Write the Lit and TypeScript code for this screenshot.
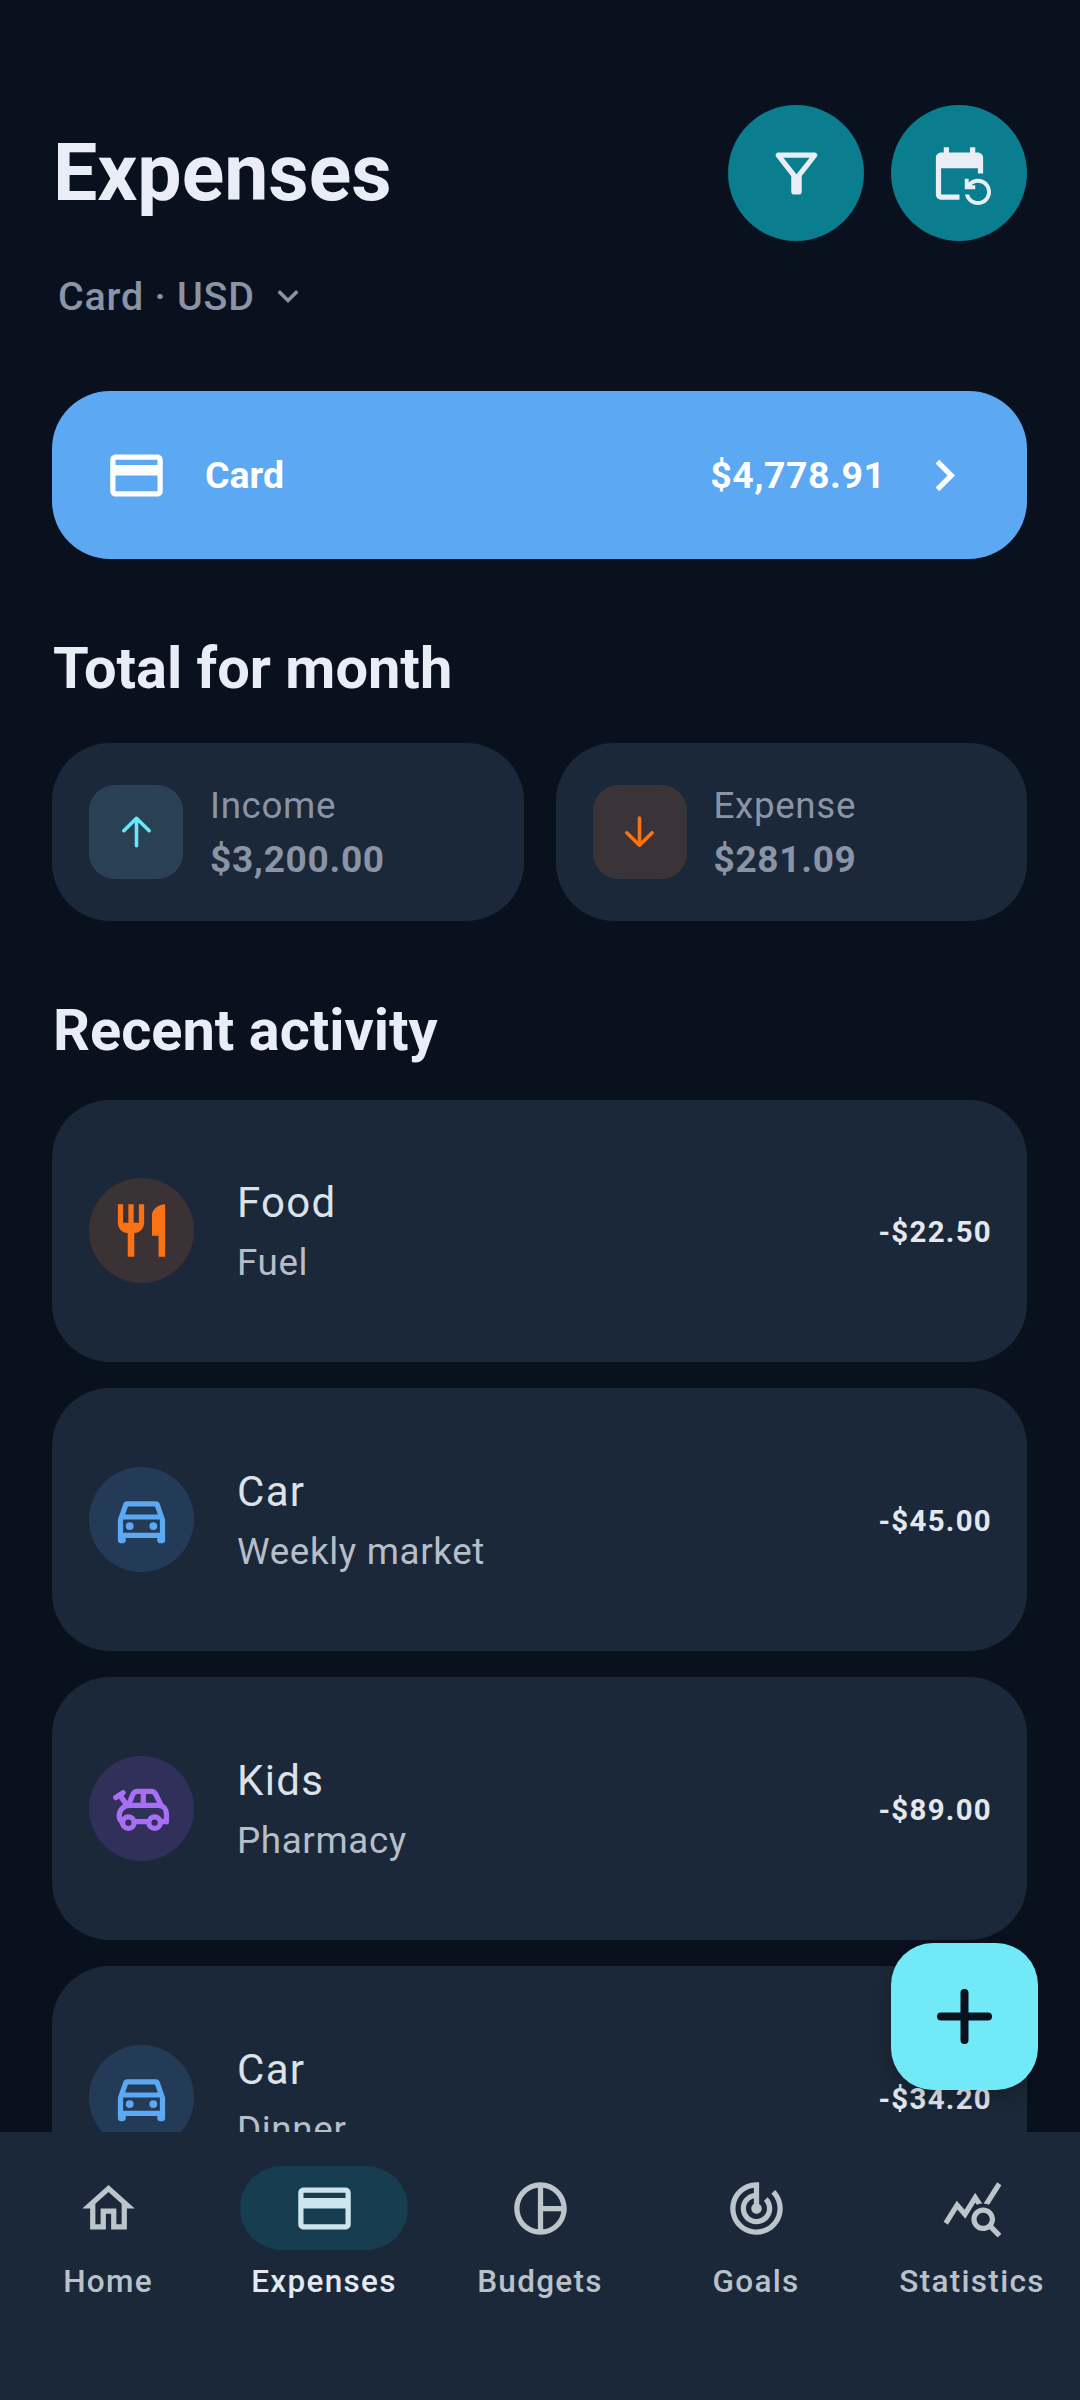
import { LitElement, html, css, svg } from 'lit';
import { customElement } from 'lit/decorators.js';

const P = {
  card: 'M20 4H4c-1.11 0-1.99.89-1.99 2L2 18c0 1.11.89 2 2 2h16c1.11 0 2-.89 2-2V6c0-1.11-.89-2-2-2zm0 14H4v-6h16v6zm0-10H4V6h16v2z',
  filter: 'M7 6h10l-5.01 6.3L7 6zm-2.75-.39C6.27 8.2 10 13 10 13v6c0 .55.45 1 1 1h2c.55 0 1-.45 1-1v-6s3.72-4.8 5.74-7.39c.51-.66.04-1.61-.79-1.61H5.04c-.83 0-1.3.95-.79 1.61z',
  repeat: 'M21 12V6c0-1.1-.9-2-2-2h-1V2h-2v2H8V2H6v2H5c-1.1 0-2 .9-2 2v14c0 1.1.9 2 2 2h7v-2H5V10h14v2h2zm-5.36 8c.43 1.45 1.77 2.5 3.36 2.5 1.93 0 3.5-1.57 3.5-3.5s-1.57-3.5-3.5-3.5c-.95 0-1.82.38-2.45 1H18V18h-4v-4h1.5v1.43C16.4 14.55 17.64 14 19 14c2.76 0 5 2.24 5 5s-2.24 5-5 5c-2.42 0-4.44-1.72-4.9-4h1.54z',
  food: 'M11 9H9V2H7v7H5V2H3v7c0 2.12 1.66 3.84 3.75 3.97V22h2.5v-9.03C11.34 12.84 13 11.12 13 9V2h-2v7zm5-3v8h2.5v8H21V2c-2.76 0-5 2.24-5 4z',
  car: 'M18.92 6.01C18.72 5.42 18.16 5 17.5 5h-11c-.66 0-1.21.42-1.42 1.01L3 12v8c0 .55.45 1 1 1h1c.55 0 1-.45 1-1v-1h12v1c0 .55.45 1 1 1h1c.55 0 1-.45 1-1v-8l-2.08-5.99zM6.85 7h10.29l1.08 3.11H5.77L6.85 7zM19 17H5v-5h14v5zM7.5 13a1.5 1.5 0 1 0 0 3 1.5 1.5 0 0 0 0-3zm9 0a1.5 1.5 0 1 0 0 3 1.5 1.5 0 0 0 0-3z',
  home: 'M12 5.69l5 4.5V18h-2v-6H9v6H7v-7.81l5-4.5M12 3L2 12h3v8h6v-6h2v6h6v-8h3L12 3z',
  pie: 'M12 2C6.49 2 2 6.49 2 12s4.49 10 10 10 10-4.49 10-10S17.51 2 12 2zm7.93 9H13V4.07c3.61.45 6.48 3.32 6.93 6.93zM4 12c0-4.07 3.06-7.44 7-7.93v15.86c-3.94-.49-7-3.86-7-7.93zm9 7.93V13h6.93c-.45 3.61-3.32 6.48-6.93 6.93z',
  track: 'M19.07 4.93l-1.41 1.41C19.1 7.79 20 9.79 20 12c0 4.42-3.58 8-8 8s-8-3.58-8-8c0-4.08 3.05-7.44 7-7.93v2.02C8.16 6.57 6 9.03 6 12c0 3.31 2.69 6 6 6s6-2.69 6-6c0-1.66-.67-3.16-1.76-4.24l-1.41 1.41C15.55 9.9 16 10.9 16 12c0 2.21-1.79 4-4 4s-4-1.79-4-4c0-1.86 1.28-3.41 3-3.86v2.14c-.6.35-1 .98-1 1.72 0 1.1.9 2 2 2s2-.9 2-2c0-.74-.4-1.38-1-1.72V2h-1C6.48 2 2 6.48 2 12s4.48 10 10 10 10-4.48 10-10c0-2.76-1.12-5.26-2.93-7.07z',
  stats: 'M19.88 18.47c.44-.7.7-1.51.7-2.39 0-2.49-2.01-4.5-4.5-4.5s-4.5 2.01-4.5 4.5 2.01 4.5 4.49 4.5c.88 0 1.7-.26 2.39-.7L21.58 23 23 21.58l-3.12-3.11zm-3.8.11c-1.38 0-2.5-1.12-2.5-2.5s1.12-2.5 2.5-2.5 2.5 1.12 2.5 2.5-1.12 2.5-2.5 2.5zm-.36-8.5c-.74.02-1.45.18-2.1.45l-.55-.83-3.8 6.18-3.01-3.52-3.63 5.81L1 17l5-8 3 3.5L13 6l2.72 4.08zm2.59.5c-.64-.28-1.33-.45-2.05-.49L21.38 2 23 3.18l-4.69 7.4z',
  more: 'M16.59 8.59L12 13.17 7.41 8.59 6 10l6 6 6-6z',
  right: 'M10 6L8.59 7.41 13.17 12l-4.58 4.59L10 18l6-6z',
};

const icon = (d: string, size: number, color: string) => html`
  <svg width=${size} height=${size} viewBox="0 0 24 24" fill=${color} fill-rule="evenodd">${svg`<path d=${d}></path>`}</svg>`;

const arrow = (d: string, color: string) => html`
  <svg width="63" height="63" viewBox="0 0 63 63" fill="none" stroke=${color} stroke-width="3.6" stroke-linecap="round" stroke-linejoin="round">${svg`<path d=${d}></path>`}</svg>`;

// toy car with a pull handle, no stock path for this one
const toyCar = (color: string) => html`
  <svg width="63" height="63" viewBox="0 0 24 24" fill="none" stroke=${color} stroke-width="2" stroke-linecap="round" stroke-linejoin="round">
    <path d="M2.200 7.800L5 6M3.800 7L6.500 10.800"></path>
    <path d="M7 10.800L8.700 6.700C9 6 9.600 5.500 10.400 5.500H15.600C16.500 5.500 17.100 6 17.500 6.700L19.500 10.800"></path>
    <path d="M12.700 5.500V10.800"></path>
    <path d="M4.400 17C3.900 16.500 3.500 15.800 3.500 14.800C3.500 12.500 5.200 10.800 7.500 10.800H18.500C20.400 10.800 21.500 12.300 21.500 14.200V17H19.400M14.600 17H9.400"></path>
    <circle cx="7" cy="17.400" r="2.200"></circle>
    <circle cx="17" cy="17.400" r="2.200"></circle>
  </svg>`;

const activity = [
  { title: 'Food', sub: 'Fuel', amount: '-$22.50', icon: icon(P.food, 63, '#f97316'), tint: '#3b3236' },
  { title: 'Car', sub: 'Weekly market', amount: '-$45.00', icon: icon(P.car, 63, '#5ca8f3'), tint: '#243b58' },
  { title: 'Kids', sub: 'Pharmacy', amount: '-$89.00', icon: toyCar('#a86ef5'), tint: '#30305a' },
  { title: 'Car', sub: 'Dinner', amount: '-$34.20', icon: icon(P.car, 63, '#5ca8f3'), tint: '#243b58' },
];

const tabs = [
  { label: 'Home', icon: P.home },
  { label: 'Expenses', icon: P.card, active: true },
  { label: 'Budgets', icon: P.pie },
  { label: 'Goals', icon: P.track },
  { label: 'Statistics', icon: P.stats },
];

@customElement('app-root')
export class AppRoot extends LitElement {
  static styles = css`
    :host {
      display: flex;
      flex-direction: column;
      position: relative;
      width: 1080px;
      height: 2400px;
      overflow: hidden;
      background: #0a111e;
      color: #e8edf6;
      font-family: Roboto, 'Noto Sans', sans-serif;
    }
    .content {
      flex: 1;
      min-height: 0;
      overflow: hidden;
      padding: 105px 53px 0 52px;
    }
    .header {
      display: flex;
      justify-content: space-between;
      align-items: flex-start;
    }
    h1 {
      margin: 22px 0 0 1px;
      font-size: 78.75px;
      line-height: 92px;
      font-weight: 700;
    }
    .actions {
      display: flex;
      gap: 27px;
    }
    .round {
      width: 136px;
      height: 136px;
      border-radius: 50%;
      background: #0a7d8f;
      display: flex;
      align-items: center;
      justify-content: center;
    }
    .picker {
      display: flex;
      align-items: center;
      gap: 12px;
      margin: 24px 0 0 6px;
      height: 62px;
      font-size: 39.4px;
      letter-spacing: 0.8px;
      font-weight: 500;
      color: #8a94a6;
    }
    .account {
      display: flex;
      align-items: center;
      height: 168px;
      margin-top: 64px;
      padding: 0 51.5px 0 53px;
      border-radius: 58px;
      background: #5ca8f3;
      color: #fff;
      font-size: 37.5px;
      font-weight: 700;
    }
    .account .name {
      flex: 1;
      margin-left: 37px;
    }
    .account .sum {
      letter-spacing: 0.5px;
      margin-right: 27px;
    }
    h2 {
      margin: 0 0 0 1px;
      font-size: 57.75px;
      line-height: 74px;
      font-weight: 700;
    }
    .total {
      margin-top: 71.5px;
    }
    .summary {
      display: grid;
      grid-template-columns: 471.5px 471.5px;
      gap: 32px;
      margin-top: 38px;
    }
    .stat {
      display: flex;
      align-items: center;
      gap: 27px;
      height: 178px;
      padding: 0 37px;
      border-radius: 58px;
      background: #1b2839;
    }
    .stat-icon {
      width: 94px;
      height: 94px;
      border-radius: 26px;
      display: flex;
      align-items: center;
      justify-content: center;
    }
    .stat-text {
      padding-top: 4.5px;
    }
    .stat-label {
      font-size: 36.75px;
      line-height: 46px;
      letter-spacing: 0.65px;
      color: #8a94a6;
    }
    .stat-value {
      margin-top: 5.5px;
      font-size: 37px;
      line-height: 50px;
      font-weight: 700;
      letter-spacing: 0.7px;
      color: #8a94a6;
    }
    .recent {
      margin-top: 72px;
    }
    .list {
      display: flex;
      flex-direction: column;
      gap: 26.25px;
      margin-top: 33px;
    }
    .row {
      display: flex;
      align-items: center;
      height: 262.5px;
      flex-shrink: 0;
      padding: 0 35px 0 37px;
      border-radius: 58px;
      background: #1b2839;
    }
    .row-icon {
      width: 105px;
      height: 105px;
      border-radius: 50%;
      display: flex;
      align-items: center;
      justify-content: center;
      margin-right: 43px;
    }
    .row-text {
      flex: 1;
      padding-top: 3px;
    }
    .row-title {
      font-size: 42px;
      line-height: 56px;
      letter-spacing: 1.3px;
      color: #dde2e9;
    }
    .row-sub {
      margin-top: 6px;
      font-size: 36.75px;
      line-height: 52px;
      letter-spacing: 0.65px;
      color: #b6bec8;
    }
    .row-amount {
      padding-top: 3px;
      font-size: 29.4px;
      font-weight: 700;
      letter-spacing: 1.3px;
      color: #e3e7ee;
    }
    .fab {
      position: absolute;
      left: 891px;
      top: 1943px;
      width: 147px;
      height: 147px;
      border-radius: 42px;
      background: #72e9f7;
      display: flex;
      align-items: center;
      justify-content: center;
      box-shadow: 0 8px 20px rgba(0, 0, 0, 0.2);
    }
    .nav {
      flex-shrink: 0;
      height: 268px;
      background: #1b2839;
      display: grid;
      grid-template-columns: repeat(5, 216px);
      padding-top: 34px;
      box-sizing: border-box;
    }
    .tab {
      display: flex;
      flex-direction: column;
      align-items: center;
    }
    .pill {
      width: 168px;
      height: 84px;
      border-radius: 42px;
      display: flex;
      align-items: center;
      justify-content: center;
    }
    .tab.active .pill {
      background: #173d50;
    }
    .tab-label {
      margin-top: 11px;
      font-size: 31.5px;
      line-height: 42px;
      font-weight: 500;
      letter-spacing: 1.3px;
      color: #b9c2ca;
    }
    .tab.active .tab-label {
      color: #e3e9f0;
    }
  `;

  render() {
    return html`
      <div class="content">
        <div class="header">
          <h1>Expenses</h1>
          <div class="actions">
            <div class="round">${icon(P.filter, 63, '#e8edf6')}</div>
            <div class="round">${icon(P.repeat, 63, '#e8edf6')}</div>
          </div>
        </div>
        <div class="picker">Card · USD ${icon(P.more, 42, '#8a94a6')}</div>
        <div class="account">
          ${icon(P.card, 63, '#fff')}
          <span class="name">Card</span>
          <span class="sum">$4,778.91</span>
          ${icon(P.right, 63, '#fff')}
        </div>
        <h2 class="total">Total for month</h2>
        <div class="summary">
          <div class="stat">
            <div class="stat-icon" style="background:#294152">${arrow('M31.5 45.700V18.300M18.800 30.700L31.500 18.300 44.200 30.700', '#67e8f9')}</div>
            <div class="stat-text">
              <div class="stat-label">Income</div>
              <div class="stat-value">$3,200.00</div>
            </div>
          </div>
          <div class="stat">
            <div class="stat-icon" style="background:#3a3337">${arrow('M31.5 18V45.200M18.800 32.800L31.500 45.200 44.200 32.800', '#f97316')}</div>
            <div class="stat-text">
              <div class="stat-label">Expense</div>
              <div class="stat-value">$281.09</div>
            </div>
          </div>
        </div>
        <h2 class="recent">Recent activity</h2>
        <div class="list">
          ${activity.map(
            (a) => html`
              <div class="row">
                <div class="row-icon" style="background:${a.tint}">${a.icon}</div>
                <div class="row-text">
                  <div class="row-title">${a.title}</div>
                  <div class="row-sub">${a.sub}</div>
                </div>
                <div class="row-amount">${a.amount}</div>
              </div>
            `,
          )}
        </div>
      </div>
      <div class="fab">
        <svg width="63" height="63" viewBox="0 0 63 63" stroke="#0a111e" stroke-width="8" stroke-linecap="round">
          <path d="M31.500 8V55M8 31.500H55"></path>
        </svg>
      </div>
      <div class="nav">
        ${tabs.map(
          (t) => html`
            <div class="tab ${t.active ? 'active' : ''}">
              <div class="pill">${icon(t.icon, 63, t.active ? '#cde6ee' : '#bcc5ca')}</div>
              <div class="tab-label">${t.label}</div>
            </div>
          `,
        )}
      </div>
    `;
  }
}
